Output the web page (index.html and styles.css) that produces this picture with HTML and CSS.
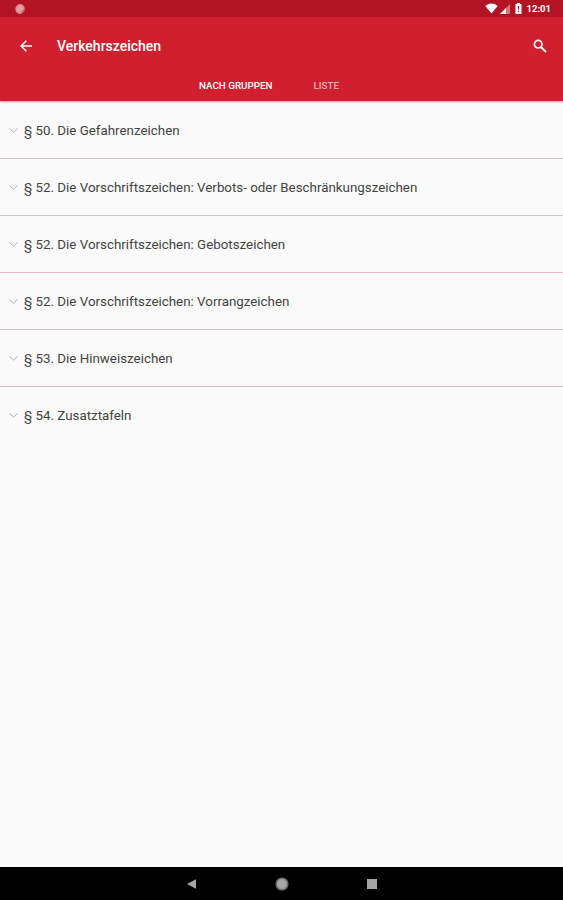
FILE: index.html
```
<!DOCTYPE html>
<html lang="de">
<head>
  <meta charset="UTF-8" />
  <meta name="viewport" content="width=device-width, initial-scale=1" />
  <title>Verkehrszeichen</title>
  <link rel="stylesheet" href="styles.css">
</head>
<body>
  <div class="status-bar">
    <svg class="status-app" width="12" height="12" viewBox="0 0 12 12">
      <path d="M6 1a4.8 4.8 0 0 1 4.8 4.8L6.5 11A5 5 0 0 1 6 1z" fill="#dc8c92" />
      <path d="M3 7 7 3M4.5 8.5 8.5 4.5" stroke="#e9b0b4" stroke-width="1.1" />
      <path d="M7 10.7 10.7 7" stroke="#dc8c92" stroke-width="1" />
    </svg>
    <div class="status-icons">
      <svg width="13" height="11" viewBox="0 0 13 11">
        <path d="M.3 3Q6.5-1.8 12.7 3L6.5 10.5z" fill="#fff" />
      </svg>
      <svg class="signal" width="10" height="10" viewBox="0 0 10 10">
        <path d="M10 0v10H0z" fill="#d9747d" />
        <path d="M6 4v6H0z" fill="#fff" />
      </svg>
      <svg class="battery" width="7" height="11" viewBox="0 0 7 11">
        <path d="M2 0h3v1h1.5v10h-6V1H2z" fill="#fff" />
        <path d="M3.5 3v3.5M3.5 7.7v1.2" stroke="#b31424" stroke-width="1.2" />
      </svg>
      <span class="clock">12:01</span>
    </div>
  </div>

  <header class="header">
    <div class="toolbar">
      <svg width="12" height="12" viewBox="0 0 12 12" fill="none" stroke="#fff" stroke-width="1.5">
        <path d="M12 6H1.2M6.3.8 1.1 6l5.2 5.2" />
      </svg>
      <h1>Verkehrszeichen</h1>
      <svg class="search" width="14" height="14" viewBox="0 0 14 14" fill="none" stroke="#fff">
        <circle cx="5.2" cy="5.2" r="3.8" stroke-width="1.7" />
        <path d="M8 8l5 5" stroke-width="2" />
      </svg>
    </div>
    <nav class="tabs">
      <a class="tab active">NACH GRUPPEN</a>
      <a class="tab">LISTE</a>
    </nav>
  </header>

  <ul class="groups">
    <li><svg class="chevron" viewBox="0 0 9 5"><path d="M.5.5l4 3.6 4-3.6" /></svg><span>§ 50. Die Gefahrenzeichen</span></li>
    <li><svg class="chevron" viewBox="0 0 9 5"><path d="M.5.5l4 3.6 4-3.6" /></svg><span>§ 52. Die Vorschriftszeichen: Verbots- oder Beschränkungszeichen</span></li>
    <li><svg class="chevron" viewBox="0 0 9 5"><path d="M.5.5l4 3.6 4-3.6" /></svg><span>§ 52. Die Vorschriftszeichen: Gebotszeichen</span></li>
    <li><svg class="chevron" viewBox="0 0 9 5"><path d="M.5.5l4 3.6 4-3.6" /></svg><span>§ 52. Die Vorschriftszeichen: Vorrangzeichen</span></li>
    <li><svg class="chevron" viewBox="0 0 9 5"><path d="M.5.5l4 3.6 4-3.6" /></svg><span>§ 53. Die Hinweiszeichen</span></li>
    <li><svg class="chevron" viewBox="0 0 9 5"><path d="M.5.5l4 3.6 4-3.6" /></svg><span>§ 54. Zusatztafeln</span></li>
  </ul>

  <footer class="nav-bar">
    <svg width="10" height="10" viewBox="0 0 10 10"><path d="M9 .3v9.4L0 5z" fill="#a6a6a6" /></svg>
    <svg width="14" height="14" viewBox="0 0 14 14">
      <circle cx="7" cy="7" r="6" fill="#999" stroke="#666" stroke-width="1.2" />
      <circle cx="7" cy="7" r="4.2" fill="#a8a8a8" />
    </svg>
    <svg width="10" height="10" viewBox="0 0 10 10"><path d="M0 0h10v10H0z" fill="#a2a2a2" /></svg>
  </footer>
</body>
</html>
```

FILE: styles.css
```
:root {
  --red: #d01f2e;
  --red-dark: #b31424;
  --page: #fafafa;
}

* {
  box-sizing: border-box;
}

body {
  margin: 0;
  height: 100vh;
  display: flex;
  flex-direction: column;
  background: var(--page);
  color: #444;
  font-family: Roboto, sans-serif;
}

svg {
  display: block;
  flex: none;
}

.status-bar {
  height: 17px;
  padding: 0 12px 0 14px;
  display: flex;
  align-items: center;
  justify-content: space-between;
  background: var(--red-dark);
}

.status-icons {
  display: flex;
  align-items: center;
}

.signal {
  margin-left: 2px;
}

.battery {
  margin-left: 5px;
}

.clock {
  margin-left: 5px;
  color: #fff;
  font-size: 9.5px;
  font-weight: 700;
  line-height: 17px;
}

.header {
  height: 84px;
  background: var(--red);
  box-shadow: 0 1px 2px rgba(0, 0, 0, 0.35);
}

.toolbar {
  height: 57px;
  padding: 0 16px 0 20px;
  display: flex;
  align-items: center;
}

.toolbar h1 {
  margin: 0 0 0 25px;
  color: #fff;
  font-size: 14px;
  font-weight: 500;
  line-height: 18px;
}

.search {
  margin-left: auto;
}

.tabs {
  display: flex;
  gap: 41px;
  padding-left: 199px;
}

.tab {
  color: #efb0b5;
  font-size: 9.8px;
  font-weight: 500;
  line-height: 24px;
}

.tab.active {
  color: #fff;
}

/* Group list */

.groups {
  flex: 1;
  margin: 0;
  padding: 1px 0 0;
  list-style: none;
}

.groups li {
  height: 57px;
  padding-left: 9px;
  display: flex;
  align-items: center;
  border-bottom: 1px solid #e7bfc5;
  font-size: 13.35px;
  white-space: nowrap;
}

.groups li:last-child {
  border-bottom: none;
}

.chevron {
  width: 9px;
  height: 5px;
  margin-right: 6px;
  fill: none;
  stroke: #b0b0b0;
}

.nav-bar {
  height: 33px;
  display: flex;
  align-items: center;
  justify-content: center;
  gap: 78px;
  background: #000;
}
```
